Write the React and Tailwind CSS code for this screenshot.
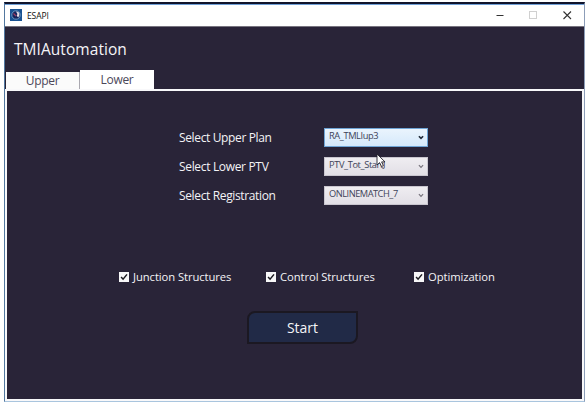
import React from "react";

function Chevron({ active }) {
  return (
    <svg width="6" height="5" viewBox="0 0 6 5" className="-mt-[1px] shrink-0" fill="none">
      <path d="M0.9 1.2 L3 3.4 L5.1 1.2" stroke={active ? "#202a38" : "#77747d"} strokeWidth={active ? 1.6 : 1.2} />
    </svg>
  );
}

function Field({ label, labelClass, value, valueClass, active }) {
  return (
    <div className="flex h-[19px] items-center">
      <span className={`w-[145px] text-[12px] leading-[19px] text-[#f4f3f6] ${labelClass}`}>{label}</span>
      <div
        className={`flex h-[19px] w-[104px] items-center justify-between border pr-[3px] pl-[4px] ${
          active
            ? "border-[#6fa5d6] bg-linear-to-b from-[#eaf4fd] to-[#d5e9fb]"
            : "border-[#c9c6cf] bg-linear-to-b from-[#efedf1] to-[#e2dfe6]"
        }`}
      >
        <span className={`-mt-[4px] text-[9.25px] leading-[13px] text-[#3d4358] ${valueClass}`}>{value}</span>
        <Chevron active={active} />
      </div>
    </div>
  );
}

function Check({ label, className }) {
  return (
    <label className={`flex h-[16px] items-center gap-[4px] ${className}`}>
      <svg width="10" height="10" viewBox="0 0 10 10" className="shrink-0">
        <rect width="10" height="10" fill="#f7f7f8" />
        <path d="M2.1 4.9 L4.1 7.2 L8 2.4" fill="none" stroke="#1b1a20" strokeWidth="1.5" />
      </svg>
      <span className="text-[11.25px] leading-[16px] tracking-[-0.08px] text-[#f4f3f6]">{label}</span>
    </label>
  );
}

export default function App() {
  return (
    <div className="relative h-[404px] w-[588px] overflow-hidden bg-white pt-[2px] pl-[4px] font-['Open_Sans','Noto_Sans',sans-serif] whitespace-nowrap">
      <div className="flex h-[400px] w-[581px] flex-col border-x border-t-2 border-b border-t-[#10142c] border-r-[#8c9db8] border-b-[#a9c5de] border-l-[#5278a0] bg-[#292438]">
        <header className="flex h-[23px] shrink-0 items-center border-t border-b border-t-[#6f9fd6] border-b-[#77747f] bg-white">
          <svg width="12" height="12" viewBox="0 0 12 12" className="-mt-[2px] ml-[5px]">
            <rect width="12" height="12" fill="#195292" />
            <circle cx="6" cy="6" r="4.2" fill="#15245c" stroke="#80add2" strokeWidth="0.8" />
            <path d="M6 2.5 Q10 2.5 9.3 6 Q9 8.5 7.5 7.8 Q6 7 7.4 5Z" fill="#e3dce7" />
            <path d="M3.5 4.5 L6 7" stroke="#9b3e65" strokeWidth="1.2" />
          </svg>
          <span className="ml-[5px] text-[8.5px] leading-[20px] tracking-[-0.1px] text-[#111]">ESAPI</span>
          <svg width="76" height="10" viewBox="0 0 76 10" className="-mt-[2px] mr-[12px] ml-auto" fill="none">
            <path d="M0.5 5.5 H7.5" stroke="#333" strokeWidth="1" />
            <rect x="33.5" y="1.5" width="7" height="7" stroke="#d0d0d0" />
            <path d="M67.5 1.5 L75 9 M75 1.5 L67.5 9" stroke="#333" strokeWidth="1.1" />
          </svg>
        </header>
        <h1 className="mt-[11px] ml-[9px] h-[22px] text-[15.5px] leading-[22px] tracking-[0.05px] text-[#f5f4f7]">TMIAutomation</h1>
        <nav className="mt-[10px] ml-[1px] flex h-[19px] shrink-0 items-end text-[12px] tracking-[-0.3px] text-[#4b4759]">
          <div className="flex h-[17px] w-[74px] items-center justify-center border-r border-[#aaa8b0] bg-[#fbfbfb]">Upper</div>
          <div className="flex h-[19px] w-[74px] items-center justify-center bg-white">Lower</div>
        </nav>
        <main className="flex min-h-0 flex-1 flex-col border-2 border-[#f8f8fa]">
          <section className="mt-[37px] ml-[172px] flex flex-col gap-[10px]">
            <Field active label="Select Upper Plan" labelClass="tracking-[-0.36px]" value="RA_TMLIup3" valueClass="tracking-[-0.38px]" />
            <Field label="Select Lower PTV" labelClass="tracking-[-0.33px]" value="PTV_Tot_StartJ" valueClass="tracking-[-0.38px]" />
            <Field label="Select Registration" labelClass="tracking-[-0.36px]" value="ONLINEMATCH_7" valueClass="tracking-[-0.48px]" />
          </section>
          <section className="mt-[64px] ml-[112px] flex">
            <Check label="Junction Structures" className="w-[147px]" />
            <Check label="Control Structures" className="w-[148px]" />
            <Check label="Optimization" className="" />
          </section>
          <button className="mt-[26px] ml-[240px] flex h-[33px] w-[111px] shrink-0 items-center justify-center rounded-tl-[8px] rounded-br-[8px] border-2 border-[#1b1822] bg-[#212a47] text-[14px] text-[#f4f4f7]">
            Start
          </button>
        </main>
      </div>
      <svg width="10" height="15" viewBox="0 0 10 15" className="absolute top-[153px] left-[376px]">
        <path d="M1 1 V12 L3.6 9.6 L5.5 13.5 L7.4 12.6 L5.6 8.9 H9Z" fill="#fff" stroke="#24212c" strokeWidth="0.9" />
      </svg>
    </div>
  );
}
